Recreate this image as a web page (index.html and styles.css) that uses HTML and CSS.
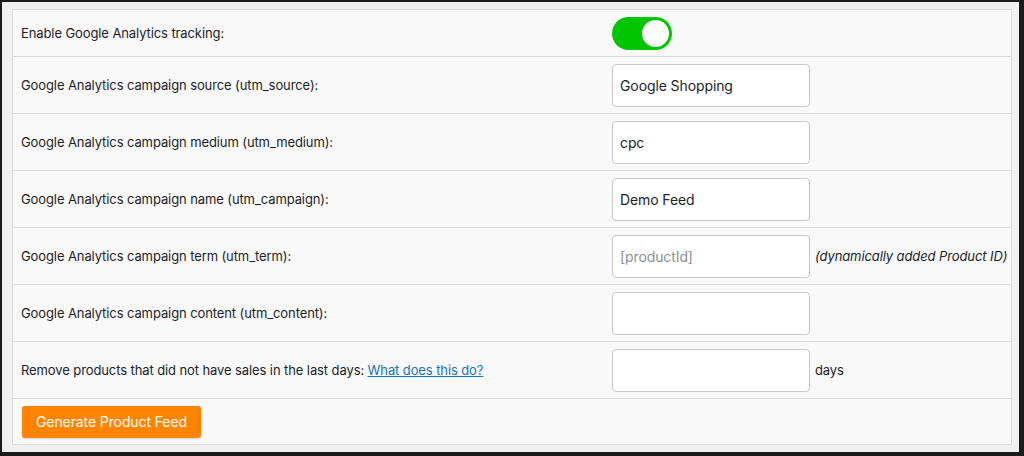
FILE: index.html
```html
<!DOCTYPE html>
<html lang="en">
  <head>
    <meta charset="UTF-8" />
    <meta name="viewport" content="width=device-width, initial-scale=1.0" />
    <title>Product Feed Settings</title>
    <link rel="stylesheet" href="styles.css">
  </head>
  <body>
    <div class="frame">
      <div class="settings">
        <div class="row row-toggle">
          <div class="label">Enable Google Analytics tracking:</div>
          <div class="field">
            <span class="toggle"><span class="knob"></span></span>
          </div>
        </div>
        <div class="row">
          <div class="label">Google Analytics campaign source (utm_source):</div>
          <div class="field"><input type="text" class="textField" value="Google Shopping"></div>
        </div>
        <div class="row">
          <div class="label">Google Analytics campaign medium (utm_medium):</div>
          <div class="field"><input type="text" class="textField" value="cpc"></div>
        </div>
        <div class="row">
          <div class="label">Google Analytics campaign name (utm_campaign):</div>
          <div class="field"><input type="text" class="textField" value="Demo Feed"></div>
        </div>
        <div class="row">
          <div class="label">Google Analytics campaign term (utm_term):</div>
          <div class="field">
            <input type="text" class="textField" placeholder="[productId]">
            <span class="note"><i>(dynamically added Product ID)</i></span>
          </div>
        </div>
        <div class="row">
          <div class="label">Google Analytics campaign content (utm_content):</div>
          <div class="field"><input type="text" class="textField"></div>
        </div>
        <div class="row">
          <div class="label">Remove products that did not have sales in the last days: <a href="#">What does this do?</a></div>
          <div class="field">
            <input type="text" class="textField">
            <span class="note">days</span>
          </div>
        </div>
        <div class="row row-button">
          <button>Generate Product Feed</button>
        </div>
      </div>
    </div>
  </body>
</html>
```

FILE: styles.css
```css
html,
body {
  margin: 0;
  box-sizing: border-box;
  font-family: Inter, "Noto Sans", sans-serif;
  color: #1d2327;
}

.frame {
  box-sizing: border-box;
  height: 456px;
  width: 1024px;
  border-style: solid;
  border-color: #1b1b1b;
  border-width: 2px 5px 4px 2px;
  background: #f0f0f1;
  padding: 7px 7px 0 10px;
}

.settings {
  background: #f9f9f9;
  border: 1px solid #dcdcde;
}

.row {
  display: flex;
  align-items: center;
  height: 57px;
  box-sizing: border-box;
  border-bottom: 1px solid #dcdcde;
  padding-left: 8px;
  font-size: 13px;
  letter-spacing: -0.1px;
}

.row-toggle {
  height: 47px;
}

.row-button {
  height: 45px;
  border-bottom: none;
}

.label {
  width: 591px;
  flex-shrink: 0;
}

.label a {
  color: #2271b1;
}

.field {
  display: flex;
  align-items: center;
  white-space: nowrap;
}

.toggle {
  display: block;
  width: 60px;
  height: 33px;
  border-radius: 17px;
  background: #00c500;
  position: relative;
}

.knob {
  position: absolute;
  top: 3px;
  right: 3px;
  width: 27px;
  height: 27px;
  border-radius: 50%;
  background: white;
}

.textField {
  box-sizing: border-box;
  width: 198px;
  height: 43px;
  padding: 0 7px;
  border: 1px solid #c8c8cc;
  border-radius: 4px;
  background: white;
  font-family: Inter, "Noto Sans", sans-serif;
  font-size: 14px;
  letter-spacing: -0.1px;
  color: #1d2327;
  outline: none;
}

.textField::placeholder {
  color: #8c8f94;
}

.note {
  margin-left: 5px;
  font-size: 13px;
}

button {
  height: 32px;
  margin-left: 1px;
  padding: 0 14px;
  cursor: pointer;
  background: #ff8500;
  border: none;
  border-radius: 3px;
  color: white;
  font-family: Inter, "Noto Sans", sans-serif;
  font-size: 14px;
  letter-spacing: -0.1px;
  box-shadow: 0 1px 2px rgba(0, 0, 0, 0.15);
}
```
